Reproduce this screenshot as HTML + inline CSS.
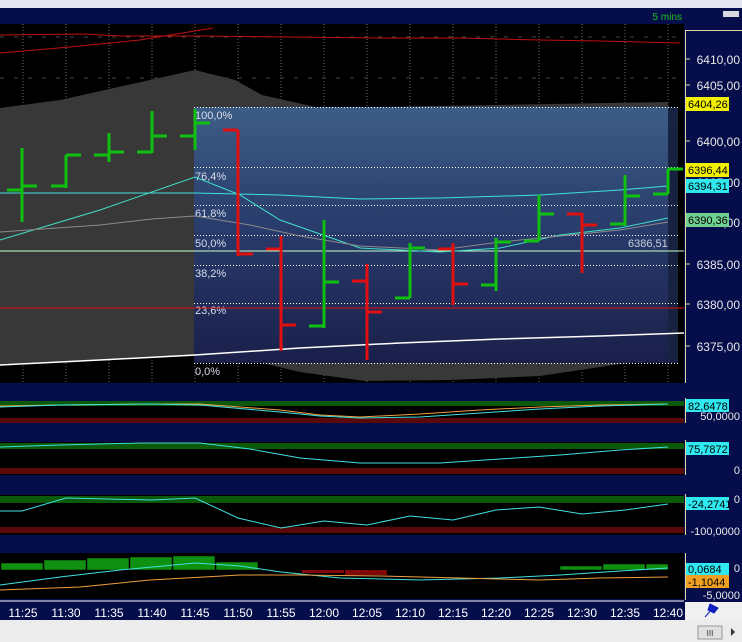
<!DOCTYPE html>
<html><head><meta charset="utf-8"><style>
html,body{margin:0;padding:0;background:#e8e8ec;}
svg{display:block;font-family:"Liberation Sans",sans-serif;}
</style></head><body>
<svg width="742" height="642" viewBox="0 0 742 642" xmlns="http://www.w3.org/2000/svg">
<defs>
<linearGradient id="fib" x1="0" y1="0" x2="0" y2="1">
<stop offset="0" stop-color="#3c5d86"/><stop offset="0.5" stop-color="#283a6a"/><stop offset="1" stop-color="#1a1f4a"/>
</linearGradient>
</defs>
<rect x="0" y="0" width="742" height="8" fill="#e4e6f0"/>
<rect x="0" y="8" width="742" height="612" fill="#050d4a"/>
<text x="682" y="20" font-size="10" fill="#22c020" text-anchor="end">5 mins</text>
<rect x="723" y="11" width="16" height="6" fill="#d8d8e0"/>
<rect x="0" y="24" width="684" height="359" fill="#000"/>
<g stroke="#6a6a6a" stroke-width="1" stroke-dasharray="1,2">
<path d="M23 24V383M66 24V383M109 24V383M152 24V383M195 24V383M238 24V383M281 24V383M324 24V383M367 24V383M410 24V383M453 24V383M496 24V383M539 24V383M582 24V383M625 24V383M668 24V383"/>
</g>
<g stroke="#444" stroke-dasharray="4,10"><path d="M0 37H684M0 78H684M0 120H684M0 162H684M0 204H684M0 246H684M0 288H684M0 330H684"/></g>
<polygon points="0,108 60,100 195,70 235,80 262,95 320,108 668,102 668,345 620,364 540,376 450,380 365,381 300,372 250,360 195,356 0,365" fill="#383838"/>
<rect x="194" y="107" width="474" height="256" fill="url(#fib)"/>
<rect x="668" y="107" width="10" height="256" fill="#1c2a50" opacity="0.8"/>
<g stroke="#fff" stroke-dasharray="1,2" stroke-width="1">
<path d="M194 107.5H678M194 167.5H678M194 205.5H678M194 235.5H678M194 265.5H678M194 303.5H678M194 363.5H678"/>
</g>
<g font-size="11" fill="#d8dce8">
<text x="195" y="119">100,0%</text><text x="195" y="180">76,4%</text><text x="195" y="217">61,8%</text><text x="195" y="247">50,0%</text><text x="195" y="277">38,2%</text><text x="195" y="314">23,6%</text><text x="195" y="375">0,0%</text>
</g>
<polyline points="0,35 85,34 120,36 205,36 290,37 380,38 460,38 540,40 600,41 680,43" fill="none" stroke="#c01010"/>
<polyline points="0,53 70,47 140,40 213,28" fill="none" stroke="#c01010"/>
<line x1="0" y1="251" x2="684" y2="251" stroke="#c8ffc8"/>
<line x1="0" y1="308" x2="684" y2="308" stroke="#e01010"/>
<polyline points="0,193 40,193 130,193 195,193 280,195 360,199 440,198 540,195 620,190 668,186" fill="none" stroke="#40e0e0"/>
<polyline points="0,365 100,360 195,355 300,348 400,343 500,339 600,336 684,333" fill="none" stroke="#fff" stroke-width="1.5"/>
<polyline points="0,240 100,210 195,177 240,195 280,220 360,248 440,252 500,248 560,235 620,228 668,218" fill="none" stroke="#40e0c8"/>
<polyline points="0,232 100,225 152,219 195,216 250,225 300,236 360,246 440,250 500,242 560,236 620,230 668,222" fill="none" stroke="#8a8a8a"/>
<text x="628" y="247" font-size="11" fill="#c8d0d8">6386,51</text>
<g stroke-width="3" fill="none">
<g stroke="#10c010">
<path d="M22 148V222M7 190H22M22 186H37"/>
<path d="M66 155V188M51 186H66M66 155H81"/>
<path d="M109 133V162M94 155H109M109 152H124"/>
<path d="M152 111V153M137 152H152M152 136H167"/>
<path d="M195 109V150M180 136H195M195 123H210"/>
<path d="M324 220V328M309 326H324M324 282H339"/>
<path d="M410 243V298M395 298H410M410 248H425"/>
<path d="M496 238V291M481 285H496M496 242H511"/>
<path d="M539 195V241M524 241H539M539 214H554"/>
<path d="M625 175V226M610 224H625M625 196H640"/>
<path d="M668 169V194M653 194H668M668 169H683"/>
</g>
<g stroke="#e01010">
<path d="M238 130V256M223 130H238M238 254H253"/>
<path d="M281 236V351M266 249H281M281 325H296"/>
<path d="M367 264V360M352 281H367M367 312H382"/>
<path d="M453 243V305M438 249H453M453 284H468"/>
<path d="M582 213V273M567 214H582M582 225H597"/>
</g>
</g>
<line x1="685.5" y1="30" x2="685.5" y2="383" stroke="#e0d8a0"/>
<line x1="685" y1="30.5" x2="742" y2="30.5" stroke="#e0d8a0"/>
<g stroke="#e0d8a0"><path d="M686 59H690M686 85H690M686 141H690M686 182H690M686 222H690M686 264H690M686 304H690M686 346H690"/></g>
<g font-size="12" fill="#e8e8e8" text-anchor="end">
<text x="740" y="64">6410,00</text><text x="740" y="90">6405,00</text><text x="740" y="146">6400,00</text><text x="740" y="187">6395,00</text><text x="740" y="227">6390,00</text><text x="740" y="269">6385,00</text><text x="740" y="309">6380,00</text><text x="740" y="351">6375,00</text>
</g>
<rect x="686" y="97" width="43" height="14" fill="#f0f000"/><text x="688" y="108" font-size="11" fill="#000">6404,26</text>
<rect x="686" y="163" width="43" height="14" fill="#f0f000"/><text x="688" y="174" font-size="11" fill="#000">6396,44</text>
<rect x="686" y="179" width="43" height="14" fill="#30e8f0"/><text x="688" y="190" font-size="11" fill="#000">6394,31</text>
<rect x="686" y="213" width="43" height="14" fill="#70d090"/><text x="688" y="224" font-size="11" fill="#000">6390,36</text>
<rect x="0" y="401" width="684" height="22" fill="#000"/>
<rect x="0" y="401" width="684" height="5" fill="#0a5a0a"/>
<rect x="0" y="418" width="684" height="5" fill="#5a0808"/>
<polyline points="0,406 60,405 150,404 200,404 280,410 320,415 360,417 420,414 480,410 540,407 600,405 668,404" fill="none" stroke="#f0a040"/>
<polyline points="0,407 60,405 150,404 200,405 280,412 320,416 360,418 420,417 480,413 540,409 600,406 668,404" fill="none" stroke="#40e0e0"/>
<rect x="686" y="399" width="43" height="13" fill="#30e8f0"/><text x="688" y="410" font-size="11" fill="#000">82,6478</text>
<text x="740" y="420" font-size="11" fill="#e8e8e8" text-anchor="end">50,0000</text>
<rect x="0" y="442" width="684" height="33" fill="#000"/>
<rect x="0" y="443" width="684" height="6" fill="#0a5a0a"/>
<rect x="0" y="468" width="684" height="6" fill="#5a0808"/>
<polyline points="0,447 60,445 140,443 200,443 250,449 300,458 360,463 440,463 500,459 560,455 620,450 668,447" fill="none" stroke="#40e0e0"/>
<rect x="686" y="442" width="43" height="13" fill="#30e8f0"/><text x="688" y="453" font-size="11" fill="#000">75,7872</text>
<text x="740" y="474" font-size="11" fill="#e8e8e8" text-anchor="end">0</text>
<rect x="0" y="495" width="684" height="40" fill="#000"/>
<rect x="0" y="496" width="684" height="7" fill="#0a5a0a"/>
<rect x="0" y="527" width="684" height="6" fill="#5a0808"/>
<polyline points="0,511 22,511 66,498 152,500 195,498 238,518 281,528 324,521 367,525 410,516 453,520 496,510 539,507 582,514 625,510 668,504" fill="none" stroke="#40e0e0"/>
<rect x="686" y="497" width="43" height="13" fill="#30e8f0"/><text x="688" y="508" font-size="11" fill="#000">-24,2741</text>
<text x="740" y="503" font-size="11" fill="#e8e8e8" text-anchor="end">0</text>
<text x="740" y="535" font-size="11" fill="#e8e8e8" text-anchor="end">-100,0000</text>
<rect x="0" y="553" width="684" height="46" fill="#000"/>
<g fill="#109010" stroke="#000" stroke-width="0.5">
<rect x="1" y="563" width="42" height="7"/><rect x="44" y="560" width="42" height="10"/><rect x="87" y="558" width="42" height="12"/><rect x="130" y="557" width="42" height="13"/><rect x="173" y="556" width="42" height="14"/><rect x="216" y="562" width="42" height="8"/>
<rect x="560" y="566" width="42" height="4"/><rect x="603" y="564" width="42" height="6"/><rect x="646" y="564" width="22" height="6"/>
</g>
<rect x="302" y="570" width="42" height="3" fill="#800808"/><rect x="345" y="570" width="42" height="5" fill="#800808"/>
<polyline points="0,585 60,577 120,570 195,563 240,566 281,572 340,578 420,580 500,578 560,575 620,571 668,568" fill="none" stroke="#40e0e0"/>
<polyline points="0,590 80,587 150,580 240,575 300,575 380,576 460,578 540,580 600,578 668,577" fill="none" stroke="#f0a040"/>
<rect x="686" y="563" width="43" height="12" fill="#30e8f0"/><text x="688" y="573" font-size="11" fill="#000">0,0684</text>
<rect x="686" y="575" width="43" height="13" fill="#f0a020"/><text x="688" y="586" font-size="11" fill="#000">-1,1044</text>
<text x="740" y="572" font-size="11" fill="#e8e8e8" text-anchor="end">0</text>
<text x="740" y="599" font-size="11" fill="#e8e8e8" text-anchor="end">-5,0000</text>
<g fill="none" stroke="#e0d8a0"><path d="M685.5 398V423M685.5 440V475M685.5 494V535M685.5 553V600"/></g>
<line x1="0" y1="601" x2="684" y2="601" stroke="#fff"/>
<g font-size="12" fill="#fff" text-anchor="middle">
<text x="23" y="617">11:25</text><text x="66" y="617">11:30</text><text x="109" y="617">11:35</text><text x="152" y="617">11:40</text><text x="195" y="617">11:45</text><text x="238" y="617">11:50</text><text x="281" y="617">11:55</text><text x="324" y="617">12:00</text><text x="367" y="617">12:05</text><text x="410" y="617">12:10</text><text x="453" y="617">12:15</text><text x="496" y="617">12:20</text><text x="539" y="617">12:25</text><text x="582" y="617">12:30</text><text x="625" y="617">12:35</text><text x="668" y="617">12:40</text>
</g>
<rect x="685" y="602" width="57" height="18" fill="#f0f0f0"/>
<path d="M705 617L712 609M710 604L718 608L714 613L708 610Z" fill="#1020c0" stroke="#1020c0"/>
<rect x="0" y="620" width="742" height="22" fill="#ececec"/>
<rect x="698" y="626" width="24" height="13" fill="#e0e0e0" stroke="#999"/>
<text x="710" y="636" font-size="8" fill="#333" text-anchor="middle">III</text>
<path d="M731 628L735 632L731 636Z" fill="#333"/>
</svg>
</body></html>
